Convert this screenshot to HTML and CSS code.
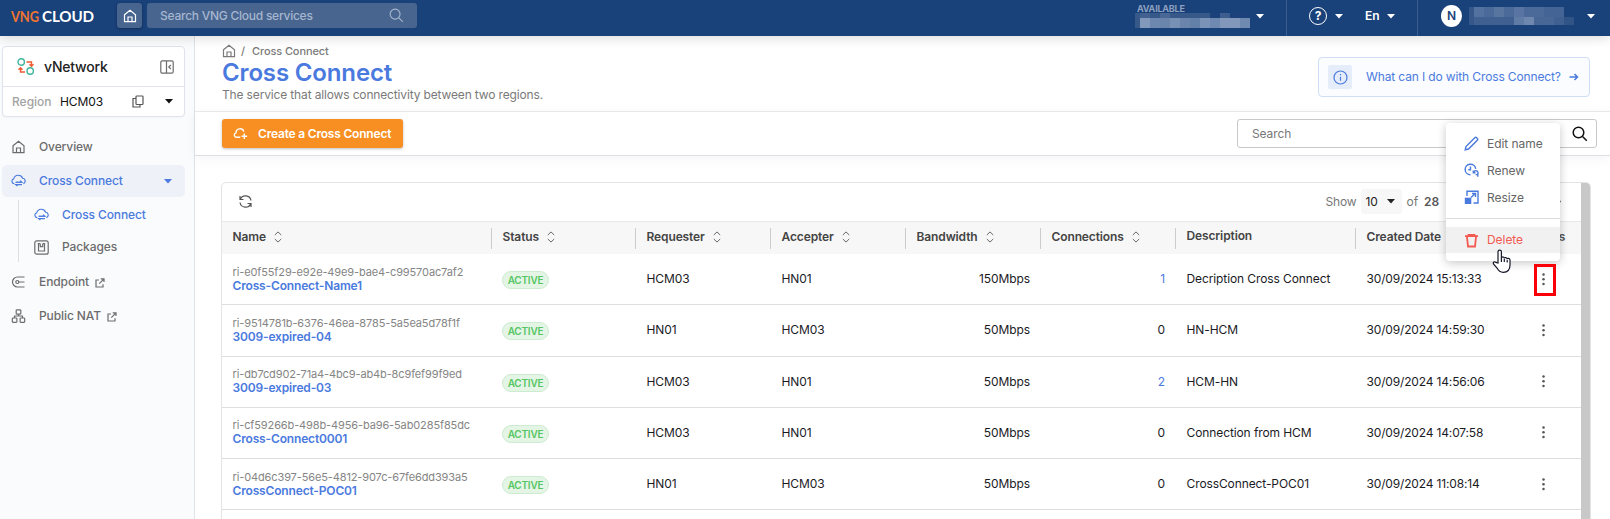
FILE: index.html
```html
<!DOCTYPE html>
<html lang="en">
<head>
<meta charset="utf-8">
<title>Cross Connect</title>
<link rel="stylesheet" href="styles.css">
</head>
<body>
<svg class="defs" width="0" height="0">
  <symbol id="home" viewBox="0 0 14 14"><path d="M1.500 5.800 7 1.200l5.500 4.600V12.700H1.500ZM5 12.500V8h4v4.500" /></symbol>
  <symbol id="caret" viewBox="0 0 8 5"><path class="solid" d="M0 0h8L4 4.600Z" /></symbol>
  <symbol id="lens" viewBox="0 0 16 16"><circle cx="6.500" cy="6.500" r="5.300" /><path d="m10.500 10.500 4.300 4.300" /></symbol>
  <symbol id="cloud" viewBox="0 0 16 14"><path d="M3.600 9.800H3.300A2.600 2.600 0 0 1 2.900 4.700 5 5 0 0 1 12.400 4a3 3 0 0 1 .8 5.800M5 8.300h6.500L9.700 6.600M11.500 10.800H5l1.800 1.700" /><path class="solid" d="M5 7.800h7v1H5ZM4.500 10.300h7v1h-7Z"/></symbol>
  <symbol id="cloud-plus" viewBox="0 0 15 12"><path d="M7.300 9.300H3.400A2.300 2.300 0 0 1 3 4.800 4 4 0 0 1 10.800 3.600M11.300 5.500v5.600M8.500 8.300h5.600" /></symbol>
  <symbol id="ext" viewBox="0 0 10 10"><path d="M4 2H1v7h7V6.300M5.700.8H9v3.300M9 .8 4.300 5.600" /></symbol>
  <symbol id="sort" viewBox="0 0 8 12"><path d="M.8 4 4 .9 7.200 4M.8 8 4 11.100 7.200 8" /></symbol>
  <symbol id="dots" viewBox="0 0 3 13"><circle class="solid" cx="1.500" cy="1.500" r="1.250" /><circle class="solid" cx="1.500" cy="6.300" r="1.250" /><circle class="solid" cx="1.500" cy="11.100" r="1.250" /></symbol>
</svg>

<header class="topbar">
  <svg class="logo" width="88" height="22"><text class="logo-vng" x="0" y="16" textLength="28" lengthAdjust="spacingAndGlyphs">VNG</text><text class="logo-cloud" x="31" y="16" textLength="52" lengthAdjust="spacingAndGlyphs">CLOUD</text></svg>
  <a class="home-btn"><svg class="ico" width="14" height="14"><use href="#home" /></svg></a>
  <div class="global-search"><span>Search VNG Cloud services</span><svg class="ico" width="15" height="15"><use href="#lens" /></svg></div>
  <div class="top-right">
    <div class="balance">
      <div class="balance-text"><span>AVAILABLE</span>
        <svg class="mosaic" width="115" height="15" shape-rendering="crispEdges"><rect width="115" height="15" fill="#37598a"/><rect x="5" y="0" width="10" height="5" fill="#42618f"/><rect x="25" width="10" height="5" fill="#4a6896"/><rect x="75" width="10" height="5" fill="#1b427a"/><rect x="85" width="10" height="5" fill="#3d5d8e"/><rect x="95" width="20" height="5" fill="#1b427a"/><rect x="5" y="5" width="10" height="10" fill="#8399bb"/><rect x="15" y="5" width="10" height="10" fill="#6d87ae"/><rect x="25" y="5" width="10" height="10" fill="#6a84ac"/><rect x="35" y="5" width="10" height="10" fill="#7890b4"/><rect x="45" y="5" width="10" height="10" fill="#6a84ac"/><rect x="55" y="5" width="10" height="10" fill="#6380a8"/><rect x="65" y="5" width="10" height="10" fill="#7b93b7"/><rect x="75" y="5" width="10" height="10" fill="#7089b0"/><rect x="85" y="5" width="20" height="10" fill="#8298bb"/><rect x="105" y="5" width="10" height="10" fill="#7089b0"/></svg>
      </div>
      <svg class="caret" width="8" height="5"><use href="#caret" /></svg>
    </div>
    <div class="locale">
      <span class="help">?</span><svg class="caret" width="8" height="5"><use href="#caret" /></svg>
      <span class="lang">En</span><svg class="caret" width="8" height="5"><use href="#caret" /></svg>
    </div>
    <div class="user">
      <span class="avatar">N</span>
      <svg class="mosaic" width="105" height="18" shape-rendering="crispEdges"><rect width="95" height="10" fill="#4b6999"/><rect width="5" height="18" fill="#355789"/><rect x="5" width="10" height="10" fill="#54729f"/><rect x="25" width="10" height="10" fill="#58759f"/><rect x="45" width="10" height="10" fill="#5974a2"/><rect x="75" width="20" height="10" fill="#446496"/><rect x="5" y="10" width="100" height="8" fill="#3f6091"/><rect x="45" y="10" width="10" height="8" fill="#5f7ca6"/><rect x="55" y="10" width="10" height="8" fill="#6e87ae"/><rect x="65" y="10" width="20" height="8" fill="#486797"/><rect x="95" y="10" width="10" height="8" fill="#315487"/></svg>
      <svg class="caret" width="8" height="5"><use href="#caret" /></svg>
    </div>
  </div>
</header>

<div class="shell">
  <aside class="sidebar">
    <div class="svc-card">
      <div class="svc-name">
        <svg class="ico net" width="18" height="18" viewBox="0 0 18 18"><circle cx="4.200" cy="4" r="3.200"/><circle cx="13.200" cy="13" r="3.200"/><path d="M9.500 4h5v4M12.500 6.300l2 2 2-2M8 14H3.500v-4M1.500 11.800l2-2 2 2"/></svg>
        <span>vNetwork</span>
        <svg class="ico" width="14" height="14" viewBox="0 0 14 14"><rect x=".8" y=".8" width="12.400" height="12.400" rx="1.500"/><path d="M6.500 1v12M10.800 5 8.800 7l2 2"/></svg>
      </div>
      <div class="svc-region">
        <span class="muted">Region</span><span class="region-val">HCM03</span>
        <svg class="ico" width="12" height="13" viewBox="0 0 12 13"><rect x="4" y="1" width="7" height="8.500" rx=".8"/><path d="M4 3.500H1V12h7V9.500"/></svg>
        <svg class="caret" width="8" height="5"><use href="#caret" /></svg>
      </div>
    </div>
    <nav class="nav">
      <a class="nav-item"><svg class="ico" width="14" height="14"><use href="#home" /></svg><span>Overview</span></a>
      <a class="nav-item current"><svg class="ico" width="15" height="14"><use href="#cloud" /></svg><span>Cross Connect</span><svg class="caret" width="8" height="5"><use href="#caret" /></svg></a>
      <div class="nav-sub">
        <a class="nav-item link"><svg class="ico" width="15" height="14"><use href="#cloud" /></svg><span>Cross Connect</span></a>
        <a class="nav-item"><svg class="ico" width="15" height="15" viewBox="0 0 15 15"><rect x=".8" y=".8" width="13.400" height="13.400" rx="2"/><path d="M4.500 3.500v7.500h6V3.500M6.300 3.700v3h2.400v-3M3.800 3.700h2.500M8.700 3.700h2.500"/></svg><span>Packages</span></a>
      </div>
      <a class="nav-item"><svg class="ico" width="14" height="12" viewBox="0 0 14 12"><path d="M13 1H6a5 5 0 0 0 0 10h7M13 6H7.300"/><circle cx="5.800" cy="6" r="1.500"/></svg><span>Endpoint</span><svg class="ico ext" width="10" height="10"><use href="#ext" /></svg></a>
      <a class="nav-item"><svg class="ico" width="14" height="14" viewBox="0 0 14 14"><rect x="4.700" y=".8" width="4.600" height="4.400" rx=".8"/><rect x=".8" y="9" width="4.600" height="4.300" rx=".8"/><rect x="8.600" y="9" width="4.600" height="4.300" rx=".8"/><path d="M7 5.200V7M3 9V7h8v2"/></svg><span>Public NAT</span><svg class="ico ext" width="10" height="10"><use href="#ext" /></svg></a>
    </nav>
  </aside>

  <main class="main">
    <section class="page-head">
      <div class="titles">
        <div class="crumbs"><svg class="ico" width="14" height="14"><use href="#home" /></svg><span>/</span><span class="crumb">Cross Connect</span></div>
        <h1>Cross Connect</h1>
        <p>The service that allows connectivity between two regions.</p>
      </div>
      <a class="info"><i><svg class="ico" width="15" height="15" viewBox="0 0 15 15"><circle cx="7.500" cy="7.500" r="6.500"/><path d="M7.500 6.800v4M7.500 4v1.300"/></svg></i><span>What can I do with Cross Connect?</span><svg class="ico arrow" width="10" height="8" viewBox="0 0 10 8"><path d="M.5 4h8M5.500 1l3 3-3 3"/></svg></a>
    </section>
    <section class="actions">
      <button class="create"><svg class="ico" width="15" height="12"><use href="#cloud-plus" /></svg><span>Create a Cross Connect</span></button>
      <div class="search"><span>Search</span><svg class="ico" width="16" height="16"><use href="#lens" /></svg></div>
    </section>
    <section class="content">
      <div class="panel">
        <div class="grid-box">
          <div class="tools">
            <svg class="ico" width="13" height="13" viewBox="0 0 13 13"><path d="M1 1v3.500h3.500M1.300 4.300A5.600 5.600 0 0 1 12 5.500M12 12V8.500H8.500M11.700 8.700A5.600 5.600 0 0 1 1 7.500"/></svg>
            <div class="pager"><span>Show</span><span class="size">10<svg class="caret" width="8" height="5"><use href="#caret" /></svg></span><span>of</span><b>28</b><svg class="ico next" width="5" height="9" viewBox="0 0 5 9"><path d="m1 1 3.500 3.500L1 8"/></svg></div>
          </div>
          <div class="row head">
            <div>Name<svg class="ico" width="8" height="12"><use href="#sort" /></svg></div>
            <div>Status<svg class="ico" width="8" height="12"><use href="#sort" /></svg></div>
            <div>Requester<svg class="ico" width="8" height="12"><use href="#sort" /></svg></div>
            <div>Accepter<svg class="ico" width="8" height="12"><use href="#sort" /></svg></div>
            <div>Bandwidth<svg class="ico" width="8" height="12"><use href="#sort" /></svg></div>
            <div>Connections<svg class="ico" width="8" height="12"><use href="#sort" /></svg></div>
            <div class="desc">Description</div>
            <div>Created Date<svg class="ico" width="8" height="12"><use href="#sort" /></svg></div>
            <div class="act">Actions</div>
          </div>
          <div class="row"><div class="name"><small>ri-e0f55f29-e92e-49e9-bae4-c99570ac7af2</small><a>Cross-Connect-Name1</a></div><div><span class="badge">ACTIVE</span></div><div>HCM03</div><div>HN01</div><div class="num">150Mbps</div><div class="num link">1</div><div>Decription Cross Connect</div><div>30/09/2024 15:13:33</div><div class="act"><svg width="3" height="13"><use href="#dots" /></svg></div></div>
          <div class="row"><div class="name"><small>ri-9514781b-6376-46ea-8785-5a5ea5d78f1f</small><a>3009-expired-04</a></div><div><span class="badge">ACTIVE</span></div><div>HN01</div><div>HCM03</div><div class="num">50Mbps</div><div class="num">0</div><div>HN-HCM</div><div>30/09/2024 14:59:30</div><div class="act"><svg width="3" height="13"><use href="#dots" /></svg></div></div>
          <div class="row"><div class="name"><small>ri-db7cd902-71a4-4bc9-ab4b-8c9fef99f9ed</small><a>3009-expired-03</a></div><div><span class="badge">ACTIVE</span></div><div>HCM03</div><div>HN01</div><div class="num">50Mbps</div><div class="num link">2</div><div>HCM-HN</div><div>30/09/2024 14:56:06</div><div class="act"><svg width="3" height="13"><use href="#dots" /></svg></div></div>
          <div class="row"><div class="name"><small>ri-cf59266b-498b-4956-ba96-5ab0285f85dc</small><a>Cross-Connect0001</a></div><div><span class="badge">ACTIVE</span></div><div>HCM03</div><div>HN01</div><div class="num">50Mbps</div><div class="num">0</div><div>Connection from HCM</div><div>30/09/2024 14:07:58</div><div class="act"><svg width="3" height="13"><use href="#dots" /></svg></div></div>
          <div class="row"><div class="name"><small>ri-04d6c397-56e5-4812-907c-67fe6dd393a5</small><a>CrossConnect-POC01</a></div><div><span class="badge">ACTIVE</span></div><div>HN01</div><div>HCM03</div><div class="num">50Mbps</div><div class="num">0</div><div>CrossConnect-POC01</div><div>30/09/2024 11:08:14</div><div class="act"><svg width="3" height="13"><use href="#dots" /></svg></div></div>
        </div>
        <div class="scrollbar"></div>
      </div>
    </section>
  </main>
</div>

<div class="menu">
  <a><svg class="ico" width="15" height="15" viewBox="0 0 15 15"><path d="M1.200 13.800 2 10.500 10.800 1.700a1.300 1.300 0 0 1 1.800 0l.7.700a1.300 1.300 0 0 1 0 1.800L4.500 13Z"/></svg>Edit name</a>
  <a><svg class="ico" width="15" height="15" viewBox="0 0 15 15"><path d="M6.500 11.800A5.300 5.300 0 1 1 11.700 5.800M6.500 3.500v3.200H4.300M9.500 9.500a2.300 2.300 0 1 1 3.300 2.500M9.300 7.500v2.300h2.200M13.800 13.800v-2.200h-2.200"/></svg>Renew</a>
  <a><svg class="ico" width="15" height="15" viewBox="0 0 15 15"><path d="M3 6V1.200h11V13H9.500M7 7.500l4.500-4.300M8 3.500h3.500V7"/><rect class="solid" x=".8" y="7.700" width="6.500" height="6.300"/></svg>Resize</a>
  <hr>
  <a class="danger"><svg class="ico" width="15" height="15" viewBox="0 0 15 15"><path d="M1 3.200h13M4.500 2.400V1.800h6v.6M3 4l1 9.500h7L12 4"/></svg>Delete</a>
</div>
<div class="highlight"></div>
<svg class="cursor" width="20" height="25" viewBox="0 0 20 25"><path d="M6 14V2.800a1.700 1.700 0 0 1 3.400 0V9c0-1.500 2.900-1.500 2.900.6 0-1.500 2.900-1.300 2.900.7 0-1.300 2.800-1.200 2.800.8V16c0 4-1.500 7.300-6.800 7.300-4 0-5-2-6.200-4.300L1.500 15c-.8-1.800 1-2.800 2.300-1.600ZM9.400 9v4M12.300 10v3M15.200 11v2.500"/></svg>
</body>
</html>
```
FILE: styles.css
```css
* { box-sizing: border-box; }
body { margin: 0; height: 519px; overflow: hidden; font: 12px/16px Inter, "Liberation Sans", sans-serif; letter-spacing: -0.1px; color: #1b1b1f; background: #fff; }
.defs { position: absolute; }
.ico { fill: none; stroke: currentColor; stroke-width: 1.2; flex: none; }
.solid { fill: currentColor; stroke: none; }
.caret { flex: none; color: inherit; }
.link { color: #4a7ade; }

.topbar { height: 36px; padding: 3px 15px 0 11px; display: flex; align-items: flex-start; background: #19417a; color: #fff; box-shadow: 0 2px 12px rgba(0,0,0,.14); position: relative; z-index: 2; }
.logo { margin-top: 3px; flex: none; }
.logo text { font: 700 15px Lato, sans-serif; }
.logo .logo-vng { fill: #ee7430; }
.logo .logo-cloud { fill: #fff; }
.home-btn { width: 25px; height: 25px; margin-left: 18px; border-radius: 3px; background: #47658f; display: flex; align-items: center; justify-content: center; box-shadow: 0 1px 3px rgba(0,0,0,.3); }
.global-search { width: 270px; height: 25px; margin-left: 5px; padding: 0 13px; border-radius: 3px; background: #47658f; color: #a6b6cf; display: flex; align-items: center; justify-content: space-between; font-weight: 500; letter-spacing: -0.25px; }
.top-right { margin: -3px 0 0 auto; display: flex; height: 36px; }
.top-right > div { display: flex; height: 36px; padding-bottom: 4px; align-items: center; }
.balance { width: 151px; }
.balance-text { width: 115px; margin-right: 6px; height: 24px; font-size: 9px; font-weight: 700; letter-spacing: -0.2px; color: #8da0bf; }
.balance-text span { display: block; line-height: 9px; padding-left: 2px; }
.mosaic { display: block; }
.locale { width: 131px; border-left: 1px solid #3a5c8e; padding-left: 22px; }
.help { width: 18px; height: 18px; border: 1.5px solid #fff; border-radius: 50%; text-align: center; line-height: 15px; font-weight: 700; margin-right: 8px; }
.lang { font-weight: 600; margin: 0 8px 0 22px; }
.user { width: 178px; border-left: 1px solid #3a5c8e; padding-left: 23px; }
.avatar { width: 21px; height: 22px; border-radius: 50%; background: #fff; color: #19417a; text-align: center; font-weight: 600; line-height: 22px; margin-right: 7px; }
.user .caret { margin-left: 13px; }

.shell { display: flex; height: 483px; }
.sidebar { width: 195px; border-right: 1px solid #e0e2ea; background: #fafbfd; padding: 10px 9px 0 2px; color: #6c6c6c; flex: none; }
.svc-card { height: 71px; border: 1px solid #e0e2ee; border-radius: 4px; background: #fff; box-shadow: 0 1px 2px rgba(0,0,0,.03); }
.svc-name { height: 40px; border-bottom: 1px solid #e0e2ee; display: flex; align-items: center; padding: 0 10px 0 14px; gap: 9px; }
.svc-name span { flex: 1; font-size: 14px; font-weight: 500; color: #222; letter-spacing: -0.2px; }
.net { stroke: #3fb59b; stroke-width: 1.4; }
.net path { stroke: #f05a33; }
.svc-region { height: 29px; display: flex; align-items: center; padding: 0 11px 0 9px; color: #111; }
.svc-region .muted { color: #a3a3a3; font-weight: 500; width: 48px; letter-spacing: 0; }
.region-val { flex: 1; }
.svc-region .ico { color: #555; margin-right: 21px; }
.nav { padding-top: 13px; font-weight: 500; }
.nav-item { height: 34px; display: flex; align-items: center; padding-left: 9px; }
.nav-item > .ico:first-child { width: 15px; margin-right: 13px; }
.nav-item .ext { margin: 2px 0 0 6px; }
.nav-item.current { height: 32px; margin: 1px 0; border-radius: 5px; background: #eef1f7; color: #4a7ade; }
.current .caret { margin: 1px 13px 0 auto; }
.nav-sub { border-left: 1px solid #dcdfe6; height: 62px; margin: 3px 0 3px 16px; padding-left: 6px; display: flex; flex-direction: column; justify-content: space-between; }
.nav-sub .nav-item { height: 30px; }

.main { flex: 1; min-width: 0; display: flex; flex-direction: column; }
.page-head { height: 76px; border-bottom: 1px solid #ebebeb; display: flex; justify-content: space-between; padding: 7px 20px 0 27px; }
.crumbs { display: flex; align-items: center; height: 16px; color: #7a7a7a; font-size: 11px; font-weight: 500; }
.crumbs span { margin-left: 5px; }
.crumbs .crumb { margin-left: 7px; }
h1 { margin: 0; font-size: 24px; line-height: 28px; color: #4a7ade; font-weight: 600; letter-spacing: -0.15px; }
p { margin: 0; color: #7a7a7a; letter-spacing: -0.15px; }
.info { width: 272px; height: 40px; margin-top: 14px; border: 1px solid #cfddf6; border-radius: 4px; background: #fafcff; color: #4a7ade; display: flex; align-items: center; padding-left: 9px; letter-spacing: -0.13px; }
.info i { width: 24px; height: 24px; border-radius: 2px; background: #e5ecfa; display: flex; align-items: center; justify-content: center; margin-right: 14px; }
.arrow { margin-left: 8px; stroke-width: 1.5; }
.actions { height: 44px; flex: none; border-bottom: 1px solid #dcdfe3; padding: 7px 13px 0 27px; display: flex; justify-content: space-between; box-shadow: 0 2px 12px rgba(0,0,0,.05); }
.create { width: 181px; height: 29px; border: 0; border-radius: 3px; background: #f88f23; color: #fff; font: 600 12px Inter, sans-serif; letter-spacing: -0.2px; display: flex; align-items: center; padding: 0 0 0 11px; gap: 10px; box-shadow: 0 1px 3px rgba(0,0,0,.25); }
.create .ico { stroke-width: 1.4; }
.search { width: 360px; height: 29px; border: 1px solid #c9c9c9; border-radius: 3px; display: flex; justify-content: space-between; align-items: center; padding: 0 8px 0 14px; color: #777; }
.search .ico { color: #111; stroke-width: 1.5; }

.content { flex: 1; padding: 26px 19px 0 26px; min-height: 0; }
.panel { height: 340px; display: flex; border: 1px solid #e4e4e4; border-radius: 5px 5px 0 0; overflow: hidden; }
.grid-box { flex: 1; min-width: 0; }
.scrollbar { width: 9px; background: #c8c8c8; }
.tools { height: 38px; display: flex; justify-content: space-between; align-items: center; padding: 0 20px 1px 17px; color: #555; }
.pager { display: flex; align-items: center; color: #777; }
.size { width: 41px; height: 25px; background: #f7f7f7; border-radius: 3px; margin: 0 5px 0 4px; padding: 0 7px 0 5px; display: flex; align-items: center; justify-content: space-between; color: #222; }
.pager b { font-weight: 600; margin-left: 6px; color: #555; }
.next { margin-left: 117px; }
.row { display: grid; grid-template-columns: 270px 144px 135px 135px 135px 135px 180px 150px 1fr; height: 51.25px; border-bottom: 1px solid #dedede; align-items: center; }
.row > div { padding: 0 10.5px; }
.row.head { height: 33px; background: #f7f7f7; border: 0; border-top: 1px solid #e8e8e8; color: #444; font-weight: 600; letter-spacing: -0.12px; }
.row.head > div { height: 21px; display: flex; align-items: center; gap: 8px; border-right: 1px solid #ccc; padding-bottom: 2px; }
.row.head > .desc { padding-bottom: 4px; }
.head .ico { stroke-width: 1; color: #666; }
.row > .act, .row.head > .act { display: flex; justify-content: center; border: 0; padding-left: 0; padding-right: 0; color: #555; }
.row .num { text-align: right; padding-right: 11px; }
.row > .name { display: flex; flex-direction: column; line-height: 14px; padding-bottom: 1px; color: #4a7ade; font-weight: 600; letter-spacing: -0.16px; }
.name small { font-size: 11px; font-weight: 400; color: #858585; letter-spacing: -0.12px; }
.row:not(.head) > div:nth-child(8) { letter-spacing: -0.16px; }
.badge { display: block; width: 47px; height: 18px; margin: 2px 0 0 -0.5px; border: 1px solid #cdebd0; border-radius: 9px; background: #e4f5e6; color: #55c562; font-size: 10px; font-weight: 600; line-height: 17px; text-align: center; letter-spacing: -0.2px; }
.row .num.link { color: #4a7ade; }

.menu { position: absolute; z-index: 3; left: 1446px; top: 123px; width: 114px; height: 138px; padding-top: 7px; background: #fff; border-radius: 4px; box-shadow: 0 2px 10px rgba(0,0,0,.22); color: #666; }
.menu a { height: 27px; display: flex; align-items: center; gap: 8px; padding-left: 18px; letter-spacing: -0.05px; }
.menu .ico { color: #4a7ade; stroke-width: 1.4; }
.menu hr { border: 0; border-top: 1px solid #ddd; margin: 7px 0 8px; }
.menu .danger { height: 26px; background: #f1f1f1; color: #f25a52; }
.menu .danger .ico { color: #f25a52; stroke-width: 1.8; }
.highlight { position: absolute; z-index: 3; left: 1534px; top: 264px; width: 22px; height: 32px; border: 3px solid #fb0007; }
.cursor { position: absolute; z-index: 4; left: 1492px; top: 249px; fill: #fff; stroke: #17172b; stroke-width: 1.2; }
```
